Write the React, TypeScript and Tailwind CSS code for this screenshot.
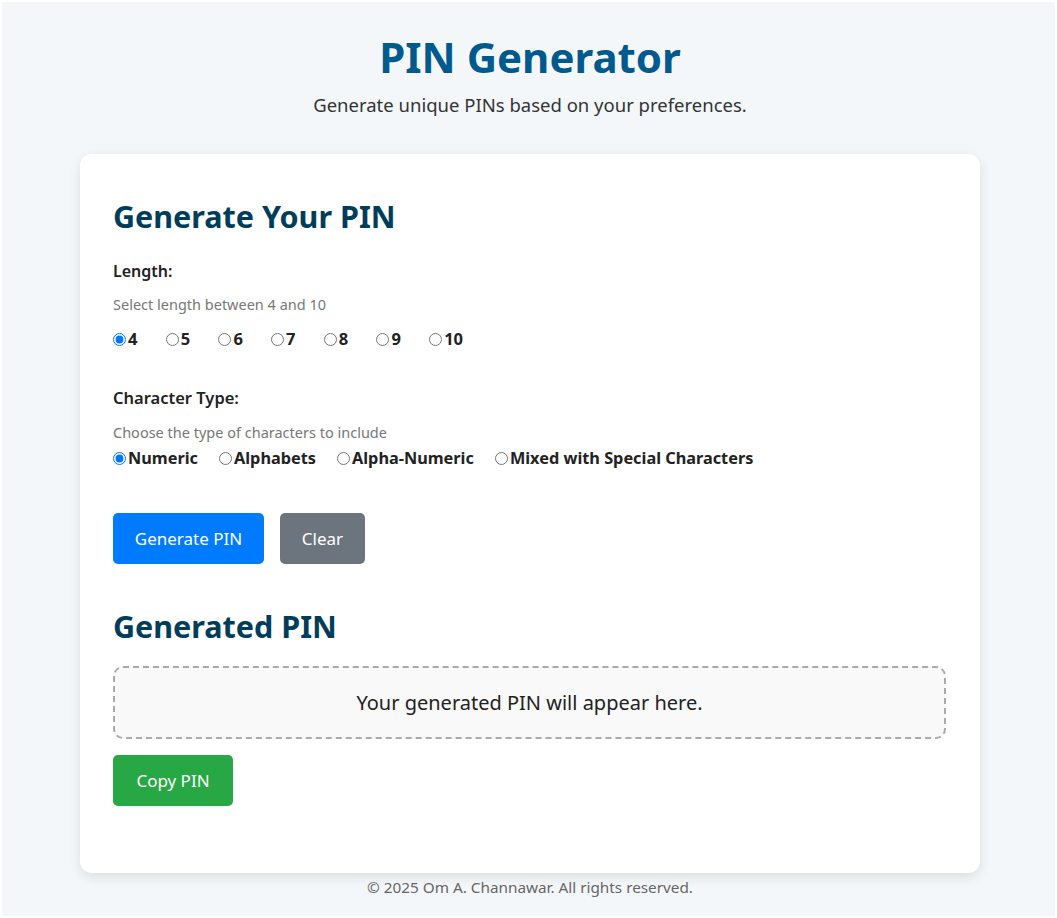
import React, { useState } from "react";

const FONT = { fontFamily: '"Noto Sans", "Open Sans", sans-serif' };

export default function App() {
  const [len, setLen] = useState("4");
  const [type, setType] = useState("numeric");
  const [pin, setPin] = useState("");

  const lengths = ["4", "5", "6", "7", "8", "9", "10"];
  const types = [
    { v: "numeric", l: "Numeric" },
    { v: "alpha", l: "Alphabets" },
    { v: "alnum", l: "Alpha-Numeric" },
    { v: "mixed", l: "Mixed with Special Characters" },
  ];

  const generate = () => {
    const sets: Record<string, string> = {
      numeric: "0123456789",
      alpha: "ABCDEFGHIJKLMNOPQRSTUVWXYZabcdefghijklmnopqrstuvwxyz",
      alnum: "ABCDEFGHIJKLMNOPQRSTUVWXYZabcdefghijklmnopqrstuvwxyz0123456789",
      mixed: "ABCDEFGHIJKLMNOPQRSTUVWXYZabcdefghijklmnopqrstuvwxyz0123456789!@#$%^&*",
    };
    const s = sets[type];
    let out = "";
    for (let i = 0; i < Number(len); i++) out += s[Math.floor(Math.random() * s.length)];
    setPin(out);
  };

  return (
    <div className="bg-white p-[2px]" style={FONT}>
      <div className="bg-[#f4f7fa] min-h-[914px] flex flex-col items-center pl-[3px]">
        <h1 className="mt-[31px] text-[42px] leading-[48px] font-bold text-[#005a8e]">PIN Generator</h1>
        <p className="mt-[12px] text-[18.5px] leading-[24px] text-[#333]">
          Generate unique PINs based on your preferences.
        </p>

        <div className="mt-[37px] w-[900px] bg-white rounded-[12px] shadow-[0_4px_12px_rgba(0,0,0,0.1)] pl-[33px] pr-[34px] pt-[42px] pb-[67px] flex flex-col">
          <h2 className="text-[30.5px] leading-[40px] font-bold text-[#003d5b]">Generate Your PIN</h2>

          <div className="mt-[24px] text-[16px] leading-[22px] font-semibold text-[#222]">Length:</div>
          <div className="mt-[12px] text-[14.5px] leading-[20px] text-[#777]">Select length between 4 and 10</div>
          <div className="mt-[14px] flex h-[22px] items-center">
            {lengths.map((l) => (
              <label key={l} className="w-[52.7px] flex items-center text-[16.5px] font-bold text-[#222] cursor-pointer">
                <input
                  type="radio"
                  name="len"
                  checked={len === l}
                  onChange={() => setLen(l)}
                  className="m-0 mr-[2px] w-[13px] h-[13px]"
                />
                {l}
              </label>
            ))}
          </div>

          <div className="mt-[37px] text-[16.5px] leading-[22px] font-semibold text-[#222]">Character Type:</div>
          <div className="mt-[13px] text-[14.5px] leading-[20px] text-[#777]">Choose the type of characters to include</div>
          <div className="mt-[5px] flex h-[22px] items-center gap-[21px]">
            {types.map((t) => (
              <label key={t.v} className="flex items-center text-[16.3px] font-bold text-[#222] cursor-pointer">
                <input
                  type="radio"
                  name="type"
                  checked={type === t.v}
                  onChange={() => setType(t.v)}
                  className="m-0 mr-[2px] w-[13px] h-[13px]"
                />
                {t.l}
              </label>
            ))}
          </div>

          <div className="mt-[44px] flex gap-[16px]">
            <button
              onClick={generate}
              className="w-[151px] h-[51px] rounded-[5px] bg-[#007bff] text-white text-[17px] flex items-center justify-center"
            >
              Generate PIN
            </button>
            <button
              onClick={() => setPin("")}
              className="w-[85px] h-[51px] rounded-[5px] bg-[#6c757d] text-white text-[17px] flex items-center justify-center"
            >
              Clear
            </button>
          </div>

          <h2 className="mt-[42px] text-[30.5px] leading-[40px] font-bold text-[#003d5b]">Generated PIN</h2>
          <div className="mt-[20px] h-[73px] border-2 border-dashed border-[#aaa] rounded-[10px] bg-[#f9f9f9] flex items-center justify-center text-[20px] text-[#222]">
            {pin || "Your generated PIN will appear here."}
          </div>
          <div className="mt-[16px] flex">
            <button
              onClick={() => pin && navigator.clipboard?.writeText(pin)}
              className="w-[120px] h-[51px] rounded-[5px] bg-[#28a745] text-white text-[17px] flex items-center justify-center"
            >
              Copy PIN
            </button>
          </div>
        </div>

        <footer className="mt-[4px] text-[15.3px] leading-[20px] text-[#666]">
          © 2025 Om A. Channawar. All rights reserved.
        </footer>
      </div>
    </div>
  );
}
